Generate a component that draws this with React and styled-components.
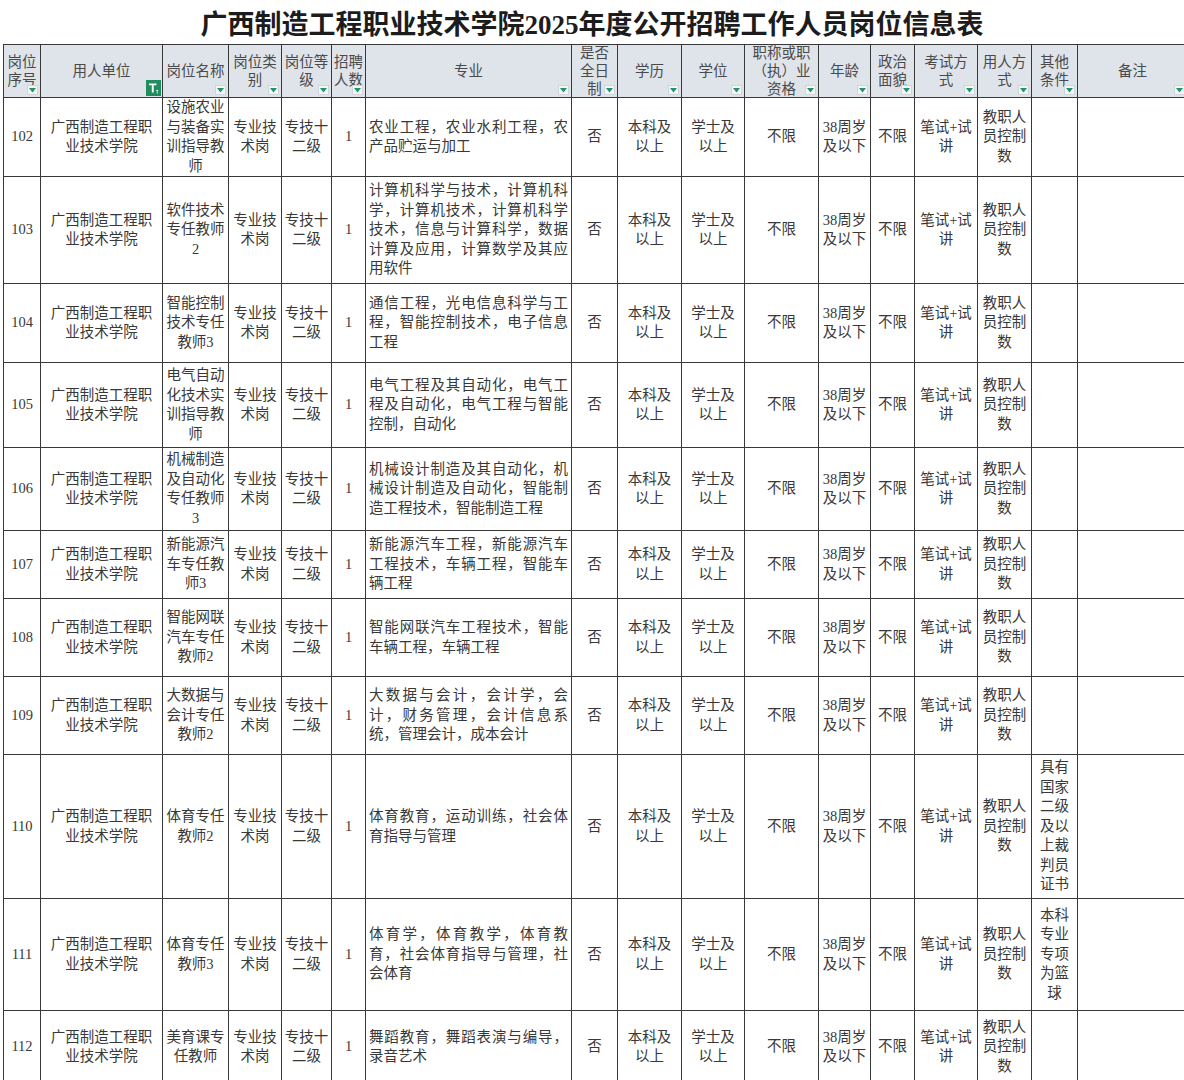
import React from "react";
import styled, { createGlobalStyle } from "styled-components";

const GlobalStyle = createGlobalStyle`
  body {
    margin: 0;
    background: #ffffff;
    font-family: "Liberation Serif", "Noto Sans CJK SC", serif;
  }
`;

const Page = styled.div`
  width: 1184px;
  height: 1080px;
  overflow: hidden;
  background: #ffffff;
`;

const Title = styled.h1`
  margin: 0;
  height: 44px;
  display: flex;
  align-items: center;
  justify-content: center;
  font-size: 27px;
  font-weight: 700;
  color: #1c1c1c;
  font-family: "Liberation Serif", "Noto Sans CJK SC", serif;
`;

const Sheet = styled.div`
  padding-left: 3px;
`;

const Grid = styled.table`
  border-collapse: collapse;
  table-layout: fixed;
  width: 1184px;
  font-size: 14.5px;
`;

const HeadCell = styled.th`
  height: 52px;
  padding: 0;
  background: #dfe4ea;
  border: 1px solid #383838;
  font-weight: 400;
  color: #4a4a4a;
`;

const HeadInner = styled.div`
  position: relative;
  height: 52px;
  display: flex;
  align-items: center;
  justify-content: center;
  overflow: hidden;
  white-space: pre-line;
  line-height: 18px;
  text-align: center;
`;

const Drop = styled.span`
  position: absolute;
  right: 2px;
  bottom: 2px;
  width: 11px;
  height: 10px;
  background: #f3f5f7;
  border: 1px solid #cfd5db;
  display: flex;
  align-items: flex-end;
  justify-content: center;
  padding-bottom: 1px;
  box-sizing: border-box;
`;

const FilterOn = styled.span`
  position: absolute;
  right: 1px;
  bottom: 1px;
  width: 15px;
  height: 16px;
  background: #1f8d5d;
  display: flex;
  align-items: center;
  justify-content: center;
`;

const Cell = styled.td`
  height: ${(p) => p.$h}px;
  padding: 0 ${(p) => (p.$left ? "3px" : "2px")};
  border: 1px solid #383838;
  text-align: ${(p) => (p.$left ? "justify" : "center")};
  vertical-align: middle;
  white-space: ${(p) => (p.$left ? "normal" : "pre-line")};
  line-height: 19.5px;
  color: #383838;
  overflow: hidden;
`;

const cols = [37, 122, 66, 53, 50, 34, 206, 46, 64, 63, 74, 52, 44, 63, 54, 46, 110];

const heads = [
  "岗位\n序号",
  "用人单位",
  "岗位名称",
  "岗位类\n别",
  "岗位等\n级",
  "招聘\n人数",
  "专业",
  "是否\n全日\n制",
  "学历",
  "学位",
  "职称或职\n（执）业\n资格",
  "年龄",
  "政治\n面貌",
  "考试方\n式",
  "用人方\n式",
  "其他\n条件",
  "备注",
];

const rows = [
  { no: "102", h: 78, name: "设施农业\n与装备实\n训指导教\n师", major: "农业工程，农业水利工程，农产品贮运与加工" },
  { no: "103", h: 106, name: "软件技术\n专任教师\n2", major: "计算机科学与技术，计算机科学，计算机技术，计算机科学技术，信息与计算科学，数据计算及应用，计算数学及其应用软件" },
  { no: "104", h: 78, name: "智能控制\n技术专任\n教师3", major: "通信工程，光电信息科学与工程，智能控制技术，电子信息工程" },
  { no: "105", h: 84, name: "电气自动\n化技术实\n训指导教\n师", major: "电气工程及其自动化，电气工程及自动化，电气工程与智能控制，自动化" },
  { no: "106", h: 82, name: "机械制造\n及自动化\n专任教师\n3", major: "机械设计制造及其自动化，机械设计制造及自动化，智能制造工程技术，智能制造工程" },
  { no: "107", h: 67, name: "新能源汽\n车专任教\n师3", major: "新能源汽车工程，新能源汽车工程技术，车辆工程，智能车辆工程" },
  { no: "108", h: 77, name: "智能网联\n汽车专任\n教师2", major: "智能网联汽车工程技术，智能车辆工程，车辆工程" },
  { no: "109", h: 77, name: "大数据与\n会计专任\n教师2", major: "大数据与会计，会计学，会计，财务管理，会计信息系统，管理会计，成本会计" },
  { no: "110", h: 143, name: "体育专任\n教师2", major: "体育教育，运动训练，社会体育指导与管理", other: "具有\n国家\n二级\n及以\n上裁\n判员\n证书" },
  { no: "111", h: 111, name: "体育专任\n教师3", major: "体育学，体育教学，体育教育，社会体育指导与管理，社会体育", other: "本科\n专业\n专项\n为篮\n球" },
  { no: "112", h: 72, name: "美育课专\n任教师", major: "舞蹈教育，舞蹈表演与编导，录音艺术" },
];

function DropArrow() {
  return (
    <Drop>
      <svg width="7" height="5" viewBox="0 0 7 5">
        <path d="M0 0 L7 0 L3.5 4.5 Z" fill="#23946a" />
      </svg>
    </Drop>
  );
}

function ActiveFilter() {
  return (
    <FilterOn>
      <svg width="11" height="12" viewBox="0 0 11 12">
        <path d="M1 1.5 H8.5 V3.2 H5.7 V10.5 H3.8 V3.2 H1 Z" fill="#ffffff" />
        <path d="M8 8 H10.5 L9.25 10 Z" fill="#ffffff" />
        <rect x="8.8" y="10" width="0.9" height="1.5" fill="#ffffff" />
      </svg>
    </FilterOn>
  );
}

export default function App() {
  return (
    <Page>
      <GlobalStyle />
      <Title>广西制造工程职业技术学院2025年度公开招聘工作人员岗位信息表</Title>
      <Sheet>
        <Grid>
          <colgroup>
            {cols.map((w, i) => (
              <col key={i} style={{ width: w }} />
            ))}
          </colgroup>
          <thead>
            <tr>
              {heads.map((t, i) => (
                <HeadCell key={i}>
                  <HeadInner>
                    {t}
                    {i === 1 ? <ActiveFilter /> : <DropArrow />}
                  </HeadInner>
                </HeadCell>
              ))}
            </tr>
          </thead>
          <tbody>
            {rows.map((r) => (
              <tr key={r.no}>
                <Cell $h={r.h}>{r.no}</Cell>
                <Cell $h={r.h}>{"广西制造工程职\n业技术学院"}</Cell>
                <Cell $h={r.h}>{r.name}</Cell>
                <Cell $h={r.h}>{"专业技\n术岗"}</Cell>
                <Cell $h={r.h}>{"专技十\n二级"}</Cell>
                <Cell $h={r.h}>1</Cell>
                <Cell $h={r.h} $left>{r.major}</Cell>
                <Cell $h={r.h}>否</Cell>
                <Cell $h={r.h}>{"本科及\n以上"}</Cell>
                <Cell $h={r.h}>{"学士及\n以上"}</Cell>
                <Cell $h={r.h}>不限</Cell>
                <Cell $h={r.h}>{"38周岁\n及以下"}</Cell>
                <Cell $h={r.h}>不限</Cell>
                <Cell $h={r.h}>{"笔试+试\n讲"}</Cell>
                <Cell $h={r.h}>{"教职人\n员控制\n数"}</Cell>
                <Cell $h={r.h}>{r.other || ""}</Cell>
                <Cell $h={r.h}></Cell>
              </tr>
            ))}
          </tbody>
        </Grid>
      </Sheet>
    </Page>
  );
}
